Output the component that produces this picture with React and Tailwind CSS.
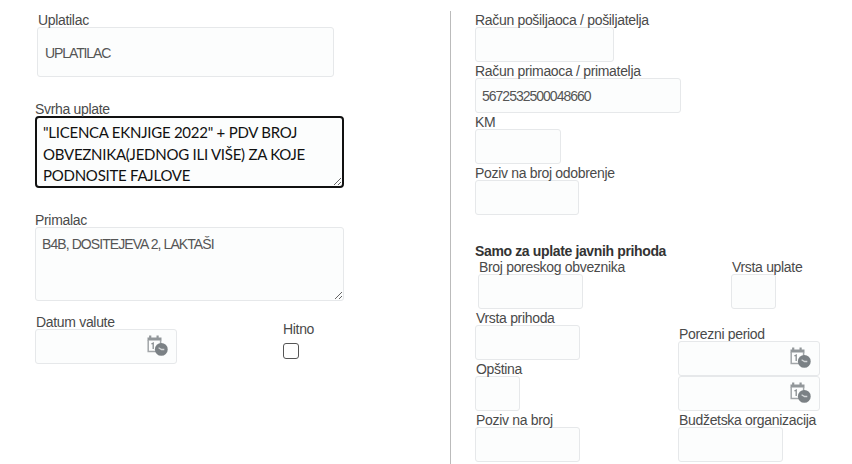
const font = "font-['Liberation_Sans',Arial,sans-serif]";
const box = "block border border-[#e6e8ea] rounded-[3px] bg-[#fcfdfd] text-[#555] outline-none";

function DateIcon() {
  return (
    <svg width="21" height="21" viewBox="0 0 21 21" className="absolute right-[8px] top-[5px]">
      <path d="M3.2 0.5v3.5M10.6 0.5v3.5" stroke="#92979a" strokeWidth="2.2" fill="none" />
      <path d="M0.5 2.5h14v3h-14z" fill="#92979a" />
      <path d="M1.2 5v11.6h8" stroke="#a2a6a9" strokeWidth="1.5" fill="none" />
      <path d="M13.6 5v4" stroke="#a2a6a9" strokeWidth="1.5" fill="none" />
      <path d="M4.4 9l1.8-1v6" stroke="#888d90" strokeWidth="1.3" fill="none" />
      <circle cx="14.3" cy="14.4" r="6.4" fill="#7b8185" />
      <path d="M11.6 12.8l2.9 1.7h2.8" stroke="#d5d8da" strokeWidth="1.3" fill="none" />
    </svg>
  );
}

function Label({ children, className = "" }) {
  return (
    <div className={`h-[14px] leading-[14px] text-[14px] text-[#4a4a4a] tracking-[-0.32px] whitespace-nowrap ${className}`}>
      {children}
    </div>
  );
}

function Field({ label, w, value, labelClass = "", className = "" }) {
  return (
    <div className={className}>
      <Label className={labelClass}>{label}</Label>
      <input
        readOnly
        defaultValue={value}
        className={`${box} ${w} h-[35px] px-[6px] text-[14px] tracking-[-1px]`}
      />
    </div>
  );
}

function DateBox() {
  return (
    <div className={`${box} relative w-[142px] h-[35px]`}>
      <DateIcon />
    </div>
  );
}

export default function App() {
  return (
    <div className={`${font} w-[852px] h-[464px] bg-white flex overflow-hidden`}>
      <div className="w-[450px] shrink-0 pt-[13px] pl-[35px] pb-0">
        <Label className="ml-[3px]">Uplatilac</Label>
        <input
          readOnly
          defaultValue="UPLATILAC"
          className={`${box} ml-[2px] w-[297px] h-[50px] px-[7px] pt-[2px] text-[14px] tracking-[-1.1px]`}
        />

        <Label className="mt-[25px]">Svrha uplate</Label>
        <textarea
          readOnly
          defaultValue={'"LICENCA EKNJIGE 2022" + PDV BROJ OBVEZNIKA(JEDNOG ILI VIŠE) ZA KOJE PODNOSITE FAJLOVE'}
          className="block w-[309px] h-[72px] border-2 border-[#111] rounded-[4px] bg-[#fcfdfd] pl-[6px] pr-[20px] pt-[4px] font-['Lato',sans-serif] text-[15px] leading-[21.5px] tracking-[-0.25px] text-[#111] outline-none overflow-hidden"
        />

        <Label className="mt-[25px]">Primalac</Label>
        <textarea
          readOnly
          defaultValue="B4B, DOSITEJEVA 2, LAKTAŠI"
          className={`${box} w-[309px] h-[74px] px-[6px] pt-[9px] text-[14px] leading-[14px] tracking-[-0.92px] overflow-hidden`}
        />

        <div className="flex mt-[14px]">
          <div className="w-[248px]">
            <Label className="ml-[1px]">Datum valute</Label>
            <DateBox />
          </div>
          <div className="pt-[7px]">
            <Label>Hitno</Label>
            <div className="mt-[7px] w-[16px] h-[16px] border border-[#555] rounded-[3px] bg-white" />
          </div>
        </div>
      </div>

      <div className="flex-1 relative pl-[25px] pt-[13px]">
        <div className="absolute left-0 top-[11px] bottom-0 w-px bg-[#bbb]" />
        <Field label="Račun pošiljaoca / pošiljatelja" w="w-[139px]" />
        <Field label="Račun primaoca / primatelja" w="w-[206px]" value="5672532500048660" className="mt-[2px]" />
        <Field label="KM" w="w-[86px]" className="mt-[2px]" />
        <Field label="Poziv na broj odobrenje" w="w-[104px]" className="mt-[2px]" />

        <div className="mt-[29px] h-[14px] leading-[14px] text-[14px] font-bold text-[#333] tracking-[-0.36px]">
          Samo za uplate javnih prihoda
        </div>

        <div className="flex mt-[2px]">
          <Field label="Broj poreskog obveznika" w="w-[105px]" className="w-[253px] ml-[3px]" labelClass="ml-[1px]" />
          <Field label="Vrsta uplate" w="w-[45px]" labelClass="ml-[1px]" />
        </div>

        <div className="flex mt-[2px]">
          <div className="w-[203px]">
            <Field label="Vrsta prihoda" w="w-[105px]" labelClass="ml-[1px]" />
            <Field label="Opština" w="w-[45px]" className="mt-[2px]" labelClass="ml-[1px]" />
          </div>
          <div className="pt-[16px]">
            <Label className="ml-[1px]">Porezni period</Label>
            <DateBox />
            <DateBox />
          </div>
        </div>

        <div className="flex mt-[2px]">
          <Field label="Poziv na broj" w="w-[105px]" className="w-[203px]" labelClass="ml-[1px]" />
          <Field label="Budžetska organizacija" w="w-[105px]" labelClass="ml-[1px]" />
        </div>
      </div>
    </div>
  );
}
